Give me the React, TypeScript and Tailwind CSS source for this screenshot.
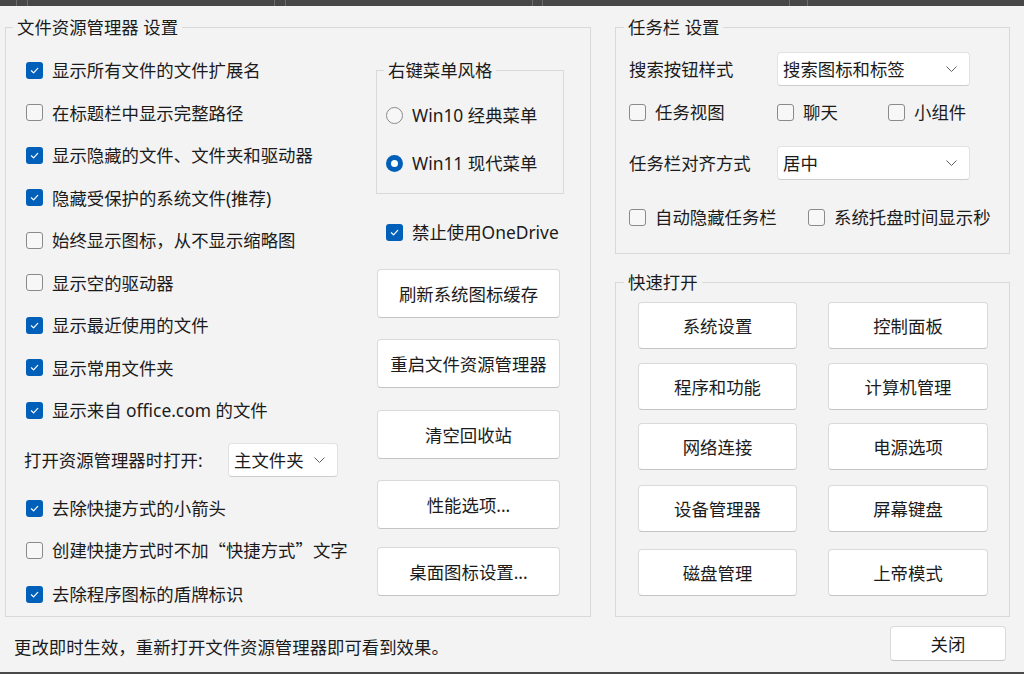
import React from 'react'

type CheckProps = { checked?: boolean; label: React.ReactNode; className?: string }

function Check({ checked = false, label, className = '' }: CheckProps) {
  return (
    <div className={`flex items-center gap-[9px] h-[24px] ${className}`}>
      {checked ? (
        <span className="w-[17px] h-[17px] rounded-[3px] bg-[#005fb8] flex items-center justify-center shrink-0">
          <svg width="11" height="11" viewBox="0 0 12 12">
            <path d="M2.6 6.3 L5 8.6 L9.5 3.7" stroke="white" strokeWidth="1.3" fill="none" strokeLinecap="round" strokeLinejoin="round" />
          </svg>
        </span>
      ) : (
        <span className="w-[17px] h-[17px] rounded-[3px] border border-[#8a8a8a] bg-[#f7f7f7] shrink-0" />
      )}
      <span className="whitespace-nowrap">{label}</span>
    </div>
  )
}

function Radio({ checked = false, label, className = '' }: CheckProps) {
  return (
    <div className={`flex items-center gap-[9px] h-[24px] ${className}`}>
      {checked ? (
        <span className="w-[17px] h-[17px] rounded-full bg-[#005fb8] flex items-center justify-center shrink-0">
          <span className="w-[7px] h-[7px] rounded-full bg-white" />
        </span>
      ) : (
        <span className="w-[17px] h-[17px] rounded-full border border-[#8a8a8a] bg-[#f7f7f7] shrink-0" />
      )}
      <span className="whitespace-nowrap">{label}</span>
    </div>
  )
}

function Select({ value, className = '' }: { value: string; className?: string }) {
  return (
    <div className={`flex items-center justify-between h-[34px] bg-white border border-[#e2e2e2] border-b-[#cdcdcd] rounded-[4px] pl-[5px] pr-[12px] ${className}`}>
      <span className="whitespace-nowrap">{value}</span>
      <svg width="11" height="6" viewBox="0 0 11 6">
        <path d="M0.5 0.5 L5.5 5.5 L10.5 0.5" stroke="#606060" strokeWidth="1" fill="none" />
      </svg>
    </div>
  )
}

function Btn({ label, className = '' }: { label: string; className?: string }) {
  return (
    <div className={`flex items-center justify-center bg-white border border-[#dadada] border-b-[#c4c4c4] rounded-[4px] whitespace-nowrap ${className}`}>
      {label}
    </div>
  )
}

const quick = [
  ['系统设置', '控制面板', 'mt-[10px]'],
  ['程序和功能', '计算机管理', 'mt-[14px]'],
  ['网络连接', '电源选项', 'mt-[13px]'],
  ['设备管理器', '屏幕键盘', 'mt-[15px]'],
  ['磁盘管理', '上帝模式', 'mt-[17px]'],
]

export default function App() {
  return (
    <div className="w-[1024px] h-[674px] bg-[#f3f3f3] flex flex-col overflow-hidden text-[17.4px] leading-[20px] text-[#1b1b1b] font-['Noto_Sans','Noto_Sans_CJK_SC',sans-serif]">
      {/* window behind */}
      <div className="h-[6px] bg-[#474747] flex shrink-0">
        <div className="w-[16px]" />
        <div className="w-[12px] border-x border-[#6c6c6c]" />
        <div className="w-[246px]" />
        <div className="w-[12px] border-x border-[#6c6c6c]" />
        <div className="w-[246px]" />
        <div className="w-[11px] border-x border-[#6c6c6c]" />
        <div className="w-[246px]" />
        <div className="w-[19px] border-x border-[#6c6c6c]" />
      </div>

      <div className="flex pl-[5px] mt-[11px] gap-[24px] shrink-0">
        {/* Explorer settings */}
        <fieldset className="w-[586px] h-[600px] border border-[#d9d9d9]">
          <legend className="ml-[7px] px-[4px] leading-[20px]">文件资源管理器 设置</legend>
          <div className="flex pl-[20px]">
            <div className="w-[350px] flex flex-col">
              <div className="flex flex-col gap-[18.5px] mt-[21px]">
                <Check checked label="显示所有文件的文件扩展名" />
                <Check label="在标题栏中显示完整路径" />
                <Check checked label="显示隐藏的文件、文件夹和驱动器" />
                <Check checked label="隐藏受保护的系统文件(推荐)" />
                <Check label="始终显示图标，从不显示缩略图" />
                <Check label="显示空的驱动器" />
                <Check checked label="显示最近使用的文件" />
                <Check checked label="显示常用文件夹" />
                <Check checked label="显示来自 office.com 的文件" />
              </div>
              <div className="flex items-center mt-[21px] -ml-[2px]">
                <span className="w-[204px] whitespace-nowrap">打开资源管理器时打开:</span>
                <Select value="主文件夹" className="w-[110px]" />
              </div>
              <Check checked label="去除快捷方式的小箭头" className="mt-[19px]" />
              <Check
                label={
                  <>
                    创建快捷方式时不加<span className="font-['Noto_Sans_CJK_SC',sans-serif]">“快捷方式”</span>文字
                  </>
                }
                className="mt-[18px]"
              />
              <Check checked label="去除程序图标的盾牌标识" className="mt-[20px]" />
            </div>

            <div className="w-[188px] flex flex-col">
              <fieldset className="mt-[23px] h-[134px] border border-[#d9d9d9]">
                <legend className="ml-[7px] px-[4px] leading-[20px]">右键菜单风格</legend>
                <div className="flex flex-col pl-[9px]">
                  <Radio label="Win10 经典菜单" className="mt-[23px]" />
                  <Radio checked label="Win11 现代菜单" className="mt-[24px]" />
                </div>
              </fieldset>
              <Check checked label="禁止使用OneDrive" className="mt-[26px] pl-[10px]" />
              <Btn label="刷新系统图标缓存" className="mt-[25px] ml-[1px] w-[183px] h-[49px]" />
              <Btn label="重启文件资源管理器" className="mt-[21px] ml-[1px] w-[183px] h-[49px]" />
              <Btn label="清空回收站" className="mt-[22px] ml-[1px] w-[183px] h-[49px]" />
              <Btn label="性能选项..." className="mt-[21px] ml-[1px] w-[183px] h-[49px]" />
              <Btn label="桌面图标设置..." className="mt-[18px] ml-[1px] w-[183px] h-[49px]" />
            </div>
          </div>
        </fieldset>

        <div className="w-[395px] flex flex-col">
          {/* Taskbar settings */}
          <fieldset className="h-[237px] border border-[#d9d9d9]">
            <legend className="ml-[8px] px-[4px] leading-[20px]">任务栏 设置</legend>
            <div className="flex flex-col pl-[13px]">
              <div className="flex items-center mt-[15px]">
                <span className="w-[148px] whitespace-nowrap">搜索按钮样式</span>
                <Select value="搜索图标和标签" className="w-[193px]" />
              </div>
              <div className="flex mt-[14px]">
                <Check label="任务视图" className="w-[148px]" />
                <Check label="聊天" className="w-[111px]" />
                <Check label="小组件" />
              </div>
              <div className="flex items-center mt-[22px]">
                <span className="w-[148px] whitespace-nowrap">任务栏对齐方式</span>
                <Select value="居中" className="w-[193px]" />
              </div>
              <div className="flex mt-[25px]">
                <Check label="自动隐藏任务栏" className="w-[179px]" />
                <Check label="系统托盘时间显示秒" />
              </div>
            </div>
          </fieldset>

          {/* Quick open */}
          <fieldset className="mt-[18px] h-[345px] border border-[#d9d9d9]">
            <legend className="ml-[8px] px-[4px] leading-[20px]">快速打开</legend>
            <div className="flex flex-col pl-[22px]">
              {quick.map(([a, b, mt]) => (
                <div key={a} className={`flex gap-[31px] ${mt}`}>
                  <Btn label={a} className="w-[159px] h-[47px]" />
                  <Btn label={b} className="w-[160px] h-[47px]" />
                </div>
              ))}
            </div>
          </fieldset>
        </div>
      </div>

      <div className="flex items-center justify-between pl-[14px] pr-[18px] mt-[9px]">
        <span className="mt-[6px] whitespace-nowrap">更改即时生效，重新打开文件资源管理器即可看到效果。</span>
        <Btn label="关闭" className="w-[116px] h-[35px]" />
      </div>

      <div className="mt-auto h-[2px] bg-[#4a4a4a] shrink-0" />
    </div>
  )
}
